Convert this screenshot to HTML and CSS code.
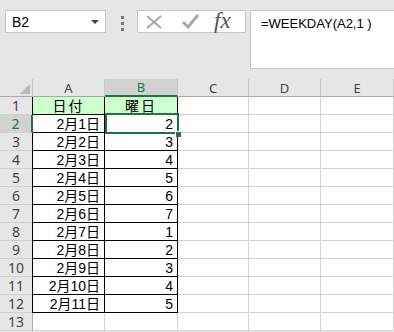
FILE: index.html
```html
<!DOCTYPE html>
<html lang="ja">
<head>
    <meta charset="UTF-8">
    <title>WEEKDAY</title>
    <link rel="stylesheet" href="styles.css">
</head>
<body>
    <div class="toolbar">
        <div class="name-box"><span>B2</span><span class="arrow"></span></div>
        <div class="grip"><i></i><i></i><i></i></div>
        <div class="fx-tools">
            <svg class="icon-x" width="18" height="14" viewBox="0 0 18 14">
                <path d="M2 1 L16 13 M16 1 L2 13" stroke="#a8a8a8" stroke-width="2" fill="none"/>
            </svg>
            <svg class="icon-ok" width="18" height="15" viewBox="0 0 18 15">
                <path d="M1 8 L6 13 L16 1" stroke="#a8a8a8" stroke-width="3" fill="none"/>
            </svg>
            <span class="fx">fx</span>
        </div>
        <div class="formula">=WEEKDAY(A2,1 )</div>
    </div>

    <div class="sheet">
        <div class="corner"><span class="tri"></span></div>
        <div class="col-head">A</div>
        <div class="col-head sel">B</div>
        <div class="col-head">C</div>
        <div class="col-head">D</div>
        <div class="col-head">E</div>

        <div class="row-head">1</div>
        <div class="cell boxed left title">日付</div>
        <div class="cell boxed title">曜日</div>
        <div class="cell"></div><div class="cell"></div><div class="cell"></div>

        <div class="row-head sel">2</div>
        <div class="cell boxed">2月1日</div>
        <div class="cell boxed active">2</div>
        <div class="cell"></div><div class="cell"></div><div class="cell"></div>

        <div class="row-head">3</div>
        <div class="cell boxed left">2月2日</div>
        <div class="cell boxed">3</div>
        <div class="cell"></div><div class="cell"></div><div class="cell"></div>

        <div class="row-head">4</div>
        <div class="cell boxed left">2月3日</div>
        <div class="cell boxed">4</div>
        <div class="cell"></div><div class="cell"></div><div class="cell"></div>

        <div class="row-head">5</div>
        <div class="cell boxed left">2月4日</div>
        <div class="cell boxed">5</div>
        <div class="cell"></div><div class="cell"></div><div class="cell"></div>

        <div class="row-head">6</div>
        <div class="cell boxed left">2月5日</div>
        <div class="cell boxed">6</div>
        <div class="cell"></div><div class="cell"></div><div class="cell"></div>

        <div class="row-head">7</div>
        <div class="cell boxed left">2月6日</div>
        <div class="cell boxed">7</div>
        <div class="cell"></div><div class="cell"></div><div class="cell"></div>

        <div class="row-head">8</div>
        <div class="cell boxed left">2月7日</div>
        <div class="cell boxed">1</div>
        <div class="cell"></div><div class="cell"></div><div class="cell"></div>

        <div class="row-head">9</div>
        <div class="cell boxed left">2月8日</div>
        <div class="cell boxed">2</div>
        <div class="cell"></div><div class="cell"></div><div class="cell"></div>

        <div class="row-head">10</div>
        <div class="cell boxed left">2月9日</div>
        <div class="cell boxed">3</div>
        <div class="cell"></div><div class="cell"></div><div class="cell"></div>

        <div class="row-head">11</div>
        <div class="cell boxed left">2月10日</div>
        <div class="cell boxed">4</div>
        <div class="cell"></div><div class="cell"></div><div class="cell"></div>

        <div class="row-head">12</div>
        <div class="cell boxed left">2月11日</div>
        <div class="cell boxed">5</div>
        <div class="cell"></div><div class="cell"></div><div class="cell"></div>

        <div class="row-head">13</div>
        <div class="cell"></div><div class="cell"></div>
        <div class="cell"></div><div class="cell"></div><div class="cell"></div>
    </div>
</body>
</html>
```

FILE: styles.css
```css
/* Excel風の画面 */
body {
    margin: 0;
    background: #e6e6e6;
    font-family: "Liberation Sans", Arial, sans-serif;
    color: #000;
    overflow: hidden;
}

.toolbar {
    height: 79px;
    box-sizing: border-box;
    padding: 10px 0 0 5px;
    display: flex;
    align-items: flex-start;
}

.name-box {
    width: 101px;
    height: 23px;
    box-sizing: border-box;
    background: #fff;
    border: 1px solid #c6c6c6;
    display: flex;
    align-items: center;
    justify-content: space-between;
    padding: 0 6px 0 6px;
    font-size: 14px;
}

.arrow {
    border-left: 4px solid transparent;
    border-right: 4px solid transparent;
    border-top: 4px solid #444;
}

.grip {
    width: 3px;
    margin: 6px 13px 0 15px;
    display: flex;
    flex-direction: column;
    gap: 3px;
}

.grip i {
    display: block;
    width: 3px;
    height: 3px;
    background: #777;
}

.fx-tools {
    width: 109px;
    height: 23px;
    box-sizing: border-box;
    background: #fff;
    border: 1px solid #c6c6c6;
    margin-right: 4px;
    display: flex;
    align-items: center;
    padding-left: 7px;
}

.icon-x {
    margin-right: 19px;
}

.icon-ok {
    margin-right: 14px;
}

.fx {
    font-family: "Liberation Serif", "Times New Roman", serif;
    font-style: italic;
    font-size: 23px;
    color: #555;
    line-height: 1;
    margin-top: -2px;
}

.formula {
    flex: 1;
    height: 59px;
    box-sizing: border-box;
    background: #fff;
    border: 1px solid #c6c6c6;
    border-right: none;
    padding: 5px 10px;
    font-size: 13px;
}

.sheet {
    display: grid;
    grid-template-columns: 33px 72px 73px 71px 72px 73px;
    grid-auto-rows: 18px;
    background: #fff;
}

.corner,
.col-head,
.row-head {
    background: #e6e6e6;
    box-sizing: border-box;
    display: flex;
    align-items: center;
    justify-content: center;
    color: #444;
    font-family: "Noto Sans", sans-serif;
}

.corner {
    border-right: 1px solid #c8c8c8;
    border-bottom: 1px solid #a8a8a8;
    position: relative;
}

.tri {
    position: absolute;
    left: 20px;
    top: 5px;
    border-left: 10px solid transparent;
    border-bottom: 10px solid #b8b8b8;
}

.col-head {
    font-size: 13px;
    border-right: 1px solid #c8c8c8;
    border-bottom: 1px solid #a8a8a8;
}

.col-head.sel {
    background: #d2d2d2;
    color: #217346;
    border-bottom: 2px solid #217346;
}

.row-head {
    font-size: 14px;
    border-right: 1px solid #a8a8a8;
    border-bottom: 1px solid #d0d0d0;
}

.row-head.sel {
    background: #d2d2d2;
    color: #217346;
    border-right: 2px solid #217346;
}

.cell {
    box-sizing: border-box;
    border-right: 1px solid #d4d4d4;
    border-bottom: 1px solid #d4d4d4;
    display: flex;
    align-items: center;
    justify-content: flex-end;
    padding: 0 4px;
    font-family: "Liberation Sans", "Noto Sans CJK JP", sans-serif;
    font-size: 14px;
    line-height: 16px;
}

.cell.boxed {
    border-color: #000;
}

.cell.left {
    box-shadow: -1px 0 0 #000;
}

.cell.title {
    background: #ccffcc;
    justify-content: center;
    letter-spacing: 2px;
}

.cell.active {
    position: relative;
}

.cell.active::before {
    content: "";
    position: absolute;
    left: 0;
    top: -2px;
    right: -2px;
    bottom: -2px;
    border: 2px solid #217346;
    z-index: 1;
}

.cell.active::after {
    content: "";
    position: absolute;
    right: -4px;
    bottom: -5px;
    width: 5px;
    height: 5px;
    background: #217346;
    border-left: 1px solid #fff;
    border-top: 1px solid #fff;
    z-index: 2;
}
```
